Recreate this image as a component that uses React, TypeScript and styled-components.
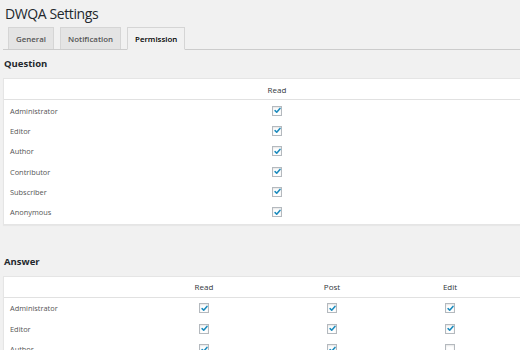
import React from 'react';
import styled, {createGlobalStyle} from 'styled-components';

const GlobalStyle = createGlobalStyle`
  html, body {
    margin: 0;
    padding: 0;
    background: #f1f1f1;
    overflow: hidden;
  }
  body {
    font-family: "Open Sans", "Noto Sans", sans-serif;
    color: #444;
  }
`

const Page = styled.div`
  width: 520px;
  height: 350px;
  overflow: hidden;
  padding: 0 0 0 3px;
  box-sizing: border-box;
`

const Title = styled.h1`
  margin: 0;
  padding: 4px 0 0 2px;
  height: 23px;
  box-sizing: border-box;
  font-size: 14px;
  letter-spacing: -0.4px;
  font-weight: 400;
  color: #23282d;
  line-height: 19px;
`

const TabBar = styled.div`
  display: flex;
  gap: 6px;
  padding: 4px 0 0 5px;
  height: 22px;
  border-bottom: 1px solid #ccc;
`

const Tab = styled.div<{ $active?: boolean }>`
  display: flex;
  align-items: center;
  justify-content: center;
  padding: 0 7px;
  box-sizing: border-box;
  height: ${p => (p.$active ? '23px' : '22px')};
  border: 1px solid #d5d5d5;
  border-bottom: ${p => (p.$active ? '1px solid #f1f1f1' : 'none')};
  background: ${p => (p.$active ? '#f1f1f1' : '#e4e4e4')};
  color: ${p => (p.$active ? '#000' : '#555')};
  font-size: 7.9px;
  font-weight: 600;
`

const SectionTitle = styled.h2<{ $top: number }>`
  margin: ${p => p.$top}px 0 0 1px;
  height: 16px;
  font-size: 9.5px;
  font-weight: 700;
  color: #23282d;
  line-height: 16px;
`

const Table = styled.div<{ $cols: string }>`
  margin-top: 6px;
  width: 540px;
  background: #fff;
  border: 1px solid #e5e5e5;
  box-shadow: 0 1px 1px rgba(0, 0, 0, 0.04);
  display: grid;
  grid-template-columns: ${p => p.$cols};
  padding-bottom: 2px;
`

const HeadCell = styled.div`
  height: 20px;
  display: flex;
  align-items: center;
  justify-content: center;
  border-bottom: 1px solid #e1e1e1;
  font-size: 8px;
  color: #32373c;
`

const LabelCell = styled.div`
  height: 20.3px;
  display: flex;
  align-items: center;
  padding: 1px 0 0 6px;
  box-sizing: border-box;
  font-size: 7.4px;
  color: #555;
`

const BoxCell = styled.div`
  height: 20.3px;
  display: flex;
  align-items: center;
  justify-content: center;
  padding-top: 1px;
  box-sizing: border-box;
`

const Check = styled.span`
  width: 8px;
  height: 8px;
  border: 1px solid #b4b9be;
  background: #fff;
  box-shadow: inset 0 1px 2px rgba(0, 0, 0, 0.1);
  display: flex;
  align-items: center;
  justify-content: center;
`

function CheckBox({checked}: {checked: boolean}) {
  return (
    <Check>
      {checked && (
        <svg width="7" height="7" viewBox="0 0 8 8">
          <path d="M1.3 4.2 L3.1 6 L6.8 1.6" fill="none" stroke="#1e8cbe" strokeWidth="1.8" strokeLinecap="round" strokeLinejoin="round" />
        </svg>
      )}
    </Check>
  );
}

interface IPermTable {
  cols: string,
  heads: string[],
  rows: { role: string, values: boolean[] }[],
}

function PermTable(props: IPermTable) {
  return (
    <Table $cols={props.cols}>
      <HeadCell />
      {props.heads.map(h => <HeadCell key={h}>{h}</HeadCell>)}
      <HeadCell />
      {props.rows.map(r => (
        <React.Fragment key={r.role}>
          <LabelCell>{r.role}</LabelCell>
          {r.values.map((v, i) => (
            <BoxCell key={`${r.role}${i}`}><CheckBox checked={v} /></BoxCell>
          ))}
          <BoxCell />
        </React.Fragment>
      ))}
    </Table>
  );
}

const questionRows = ['Administrator', 'Editor', 'Author', 'Contributor', 'Subscriber', 'Anonymous']
  .map(role => ({ role, values: [true] }));

const answerRows = [
  { role: 'Administrator', values: [true, true, true] },
  { role: 'Editor', values: [true, true, true] },
  { role: 'Author', values: [true, true, false] },
  { role: 'Contributor', values: [true, true, false] },
];

export default function App() {
  return (
    <Page>
      <GlobalStyle />
      <Title>DWQA Settings</Title>
      <TabBar>
        <Tab>General</Tab>
        <Tab>Notification</Tab>
        <Tab $active>Permission</Tab>
      </TabBar>
      <SectionTitle $top={6}>Question</SectionTitle>
      <PermTable cols="193px 160px 1fr" heads={['Read']} rows={questionRows} />
      <SectionTitle $top={29}>Answer</SectionTitle>
      <PermTable cols="131px 138px 118px 118px 1fr" heads={['Read', 'Post', 'Edit']} rows={answerRows} />
    </Page>
  );
}
